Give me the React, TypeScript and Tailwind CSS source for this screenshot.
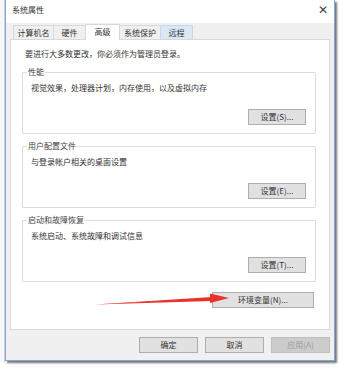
import React from "react";

const font = { fontFamily: '"Noto Sans CJK SC", "Noto Sans", sans-serif' };

type GroupProps = {
  title: string;
  text: string;
  button: string;
};

const WinButton = ({ label, className = "", disabled = false }: { label: string; className?: string; disabled?: boolean }) => (
  <div
    className={
      "h-[16px] flex items-center justify-center text-[8px] leading-none border " +
      (disabled
        ? "bg-[#cccccc] border-[#bfbfbf] text-[#9a9a9a] "
        : "bg-[#e1e1e1] border-[#adadad] text-[#333] ") +
      className
    }
  >
    {label}
  </div>
);

const Group = ({ title, text, button }: GroupProps) => (
  <div className="relative ml-[11px] w-[294px] h-[62px] border border-[#dcdcdc] rounded-[1px]">
    <span className="absolute left-[4px] top-[-6px] bg-white px-[1px] text-[8px] leading-[10px] text-[#444]">
      {title}
    </span>
    <div className="pl-[8px] pt-[10px] text-[8px] leading-[10px] text-[#333]">{text}</div>
    <div className="flex justify-end pr-[9px] mt-[16px]">
      <WinButton label={button} className="w-[58px]" />
    </div>
  </div>
);

export default function App() {
  return (
    <div className="w-[345px] h-[369px] bg-white relative overflow-hidden flex" style={font}>
      {/* background window strip */}
      <div className="w-[5px] h-[362px] bg-[#f7f7f7] border-r border-[#cfcfcf]" />

      {/* dialog window */}
      <div className="w-[330px] h-[361px] flex flex-col border-x border-b border-[#7fa9d8] bg-[#f0f0f0] shadow-[2px_2px_2px_rgba(0,0,0,0.55)]">
        {/* title bar */}
        <div className="h-[23px] bg-white flex items-center justify-between pl-[6px] pr-[6px] shrink-0">
          <span className="text-[8px] text-[#333] leading-none -mt-[4px]">系统属性</span>
          <span className="text-[12px] text-[#444] leading-none -mt-[6px]">✕</span>
        </div>

        {/* tabs */}
        <div className="flex items-end pl-[7px] h-[16px] shrink-0">
          <div className="h-[14px] px-[2px] w-[40px] flex items-center justify-center text-[8px] text-[#333] border-t border-l border-[#d9d9d9] bg-[#f0f0f0]">计算机名</div>
          <div className="h-[14px] w-[32px] flex items-center justify-center text-[8px] text-[#333] border-t border-l border-[#d9d9d9] bg-[#f0f0f0]">硬件</div>
          <div className="h-[16px] w-[35px] flex items-start pt-[1px] justify-center text-[8px] text-[#333] border-t border-x border-[#d9d9d9] bg-white relative top-[1px]">高级</div>
          <div className="h-[14px] w-[40px] flex items-center justify-center text-[8px] text-[#333] border-t border-[#d9d9d9] bg-[#f0f0f0]">系统保护</div>
          <div className="h-[14px] w-[33px] flex items-center justify-center text-[8px] text-[#333] border-t border-x border-[#c5d9ee] bg-[#dae8f5]">远程</div>
        </div>

        {/* tab page */}
        <div className="ml-[4px] w-[320px] h-[291px] bg-white border border-[#d9d9d9] shrink-0 flex flex-col">
          <div className="pl-[14px] pt-[9px] text-[8px] leading-[10px] text-[#333]">
            要进行大多数更改，你必须作为管理员登录。
          </div>
          <div className="mt-[13px] flex flex-col gap-[12px]">
            <Group title="性能" text="视觉效果，处理器计划，内存使用，以及虚拟内存" button="设置(S)..." />
            <Group title="用户配置文件" text="与登录帐户相关的桌面设置" button="设置(E)..." />
            <Group title="启动和故障恢复" text="系统启动、系统故障和调试信息" button="设置(T)..." />
          </div>
          <div className="flex justify-end pr-[15px] mt-[10px]">
            <WinButton label="环境变量(N)..." className="w-[102px]" />
          </div>
        </div>

        {/* bottom buttons */}
        <div className="flex justify-end gap-[7px] pr-[4px] pt-[7px]">
          <WinButton label="确定" className="w-[59px]" />
          <WinButton label="取消" className="w-[59px]" />
          <WinButton label="应用(A)" className="w-[59px]" disabled />
        </div>
      </div>

      {/* red annotation arrow */}
      <svg className="absolute left-0 top-0 pointer-events-none" width="345" height="369">
        <path d="M95 304.5 L212 298.3 L212 301 Z" fill="#e8322b" />
        <path d="M95 304.5 L212 297 L212 299 Z" fill="#e8322b" />
        <path d="M210 293.5 L229 298 L210 303 Z" fill="#e8322b" />
      </svg>
    </div>
  );
}
